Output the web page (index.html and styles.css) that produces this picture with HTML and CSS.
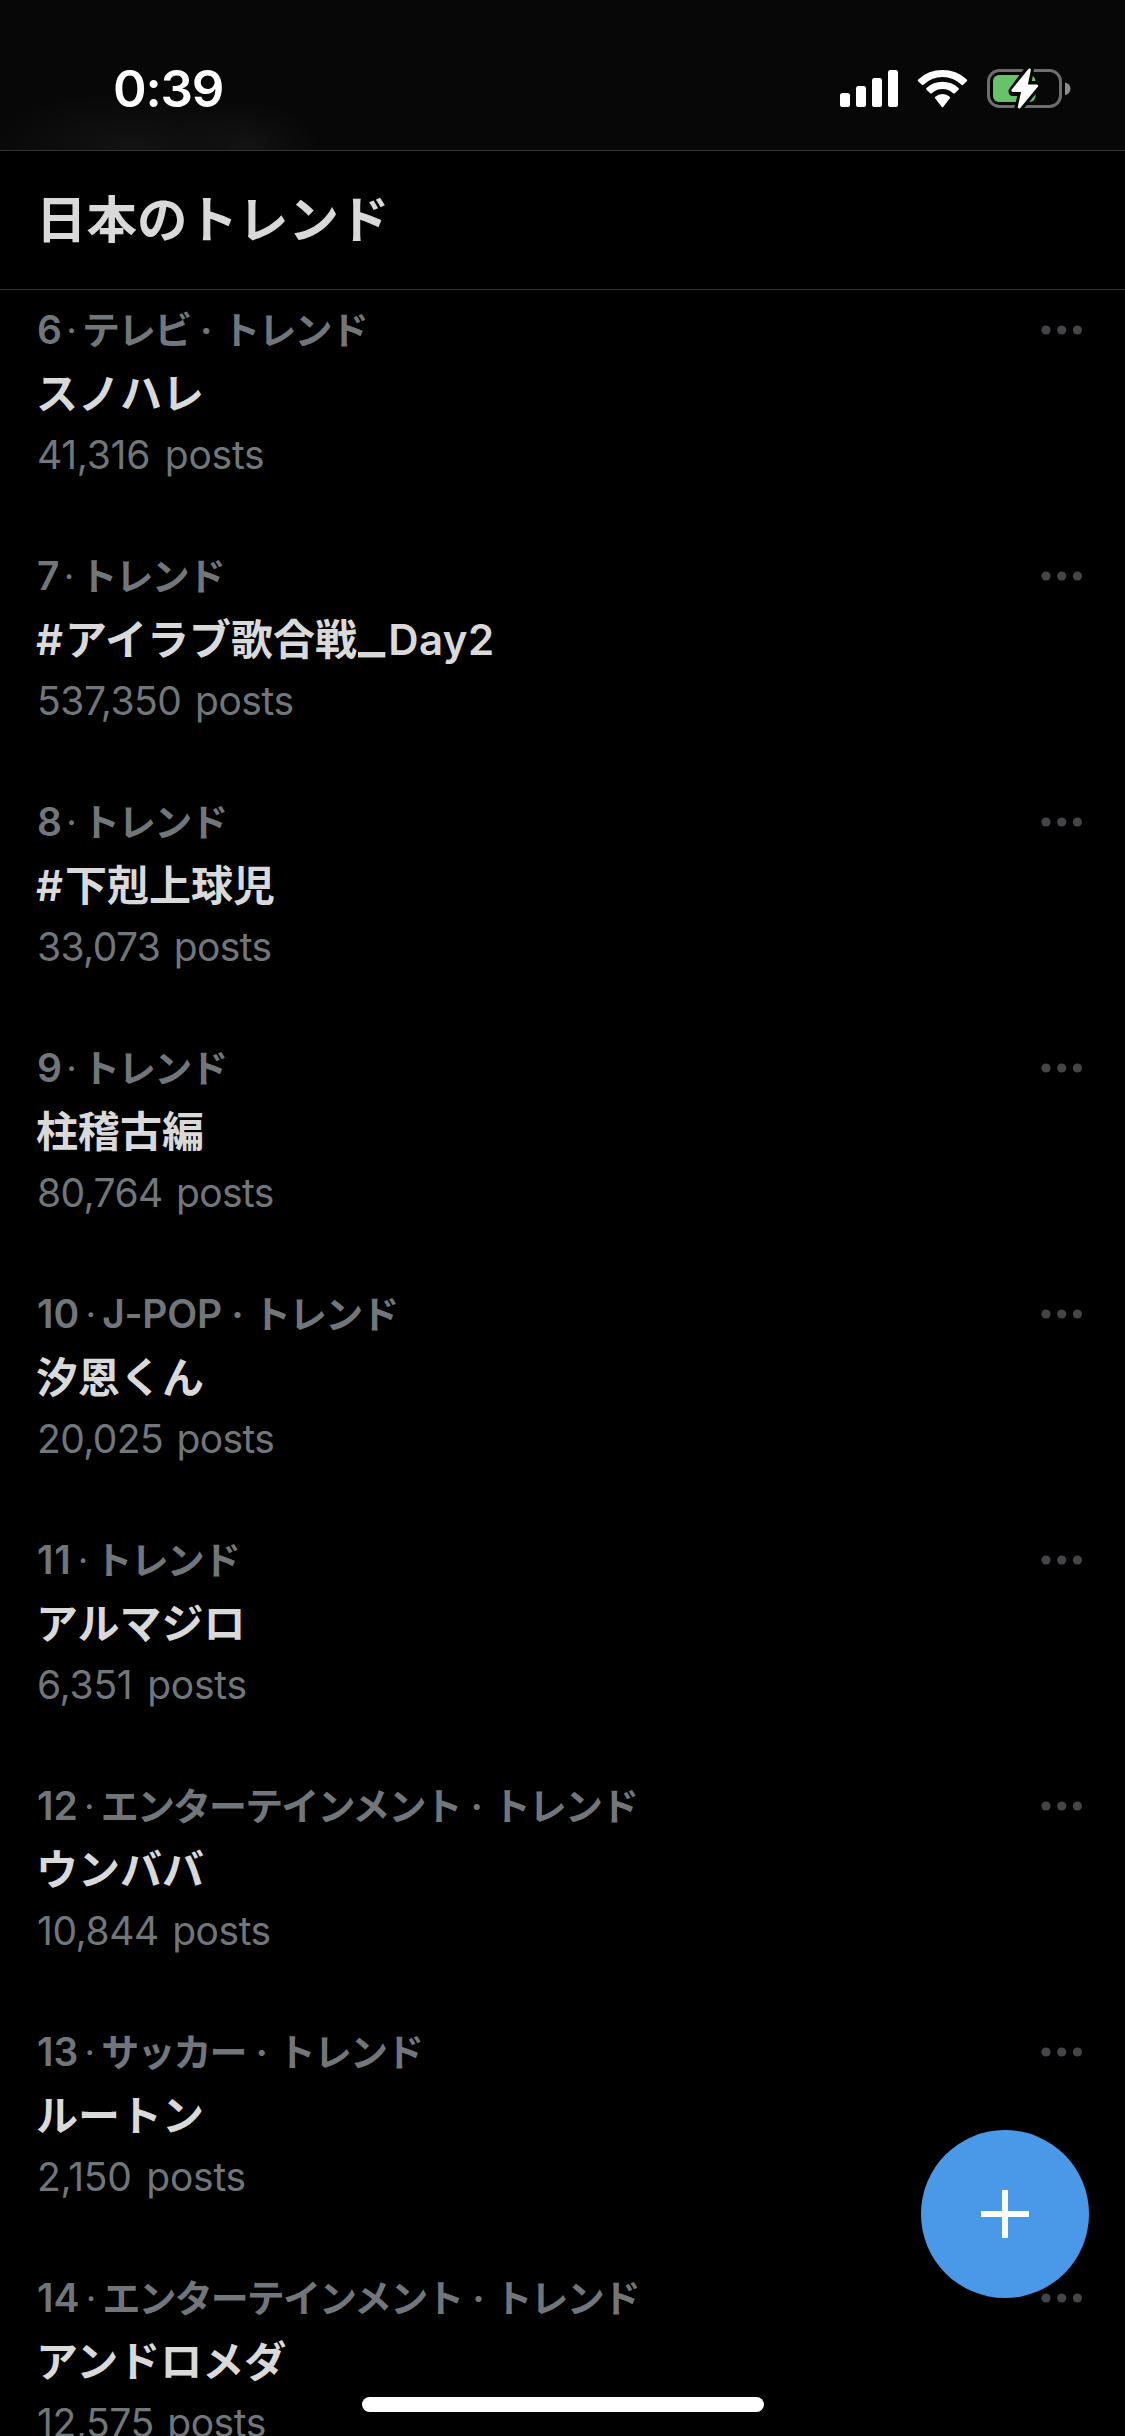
FILE: index.html
```html
<!DOCTYPE html>
<html lang="ja">
<head>
<meta charset="utf-8">
<title>日本のトレンド</title>
<link rel="stylesheet" href="styles.css">
</head>
<body>
<div class="screen">
  <header class="status">
    <span class="time">0:39</span>
    <svg class="status-icons" width="240" height="48" viewBox="0 0 240 48">
      <g fill="#fff">
        <rect x="0" y="27" width="10" height="14" rx="2.6"/>
        <rect x="16" y="20" width="10" height="21" rx="2.6"/>
        <rect x="32" y="12" width="10" height="29" rx="2.6"/>
        <rect x="48" y="4" width="10" height="37" rx="2.6"/>
        <path d="M78.2 15.2a1.2 1.2 0 0 1 0-1.7A35.5 35.5 0 0 1 126.800 13.500a1.2 1.2 0 0 1 0 1.700L123.200 18.700a1.200 1.200 0 0 1-1.700 0A27.400 27.400 0 0 0 83.500 18.700a1.200 1.200 0 0 1-1.700 0Z"/>
        <path d="M86.500 23.700a1.200 1.200 0 0 1 0-1.700A23.500 23.500 0 0 1 118.500 22a1.200 1.200 0 0 1 0 1.700L114.800 27.300a1.200 1.200 0 0 1-1.600 0A15.600 15.600 0 0 0 91.800 27.300a1.200 1.200 0 0 1-1.600 0Z"/>
        <path d="M95.300 32.500a1.200 1.200 0 0 1 0-1.800A11.300 11.300 0 0 1 109.700 30.700a1.200 1.200 0 0 1 0 1.800L103.400 40.700a1.200 1.200 0 0 1-1.800 0Z"/>
      </g>
      <rect x="148.500" y="4.500" width="72" height="36" rx="11" fill="none" stroke="#6e6e6e" stroke-width="3"/>
      <path d="M225 16.500a6.300 6.300 0 0 1 0 12.500Z" fill="#8a8a8a"/>
      <rect x="153" y="9" width="42.500" height="27" rx="6" fill="#67c466"/>
      <path d="M189.500 3L173 25.500h10L179 41.500L197 19.500h-10.500Z" fill="#070707" stroke="#070707" stroke-width="9" stroke-linejoin="round"/>
      <path d="M189.500 3.800L172.800 24.500h10L179.200 41L196.700 19.800h-10.500Z" fill="#fff" stroke="#fff" stroke-width="2.800" stroke-linejoin="round"/>
    </svg>
  </header>
  <h1 class="title">日本のトレンド</h1>
  <main class="list">
    <article class="trend"><div class="meta"><span class="rank">6</span><span class="dot">·</span><span class="category"><span class="ja">テレビ</span> · <span class="ja">トレンド</span></span><svg class="more" viewBox="0 0 42 10"><circle cx="5" cy="5" r="4.600"/><circle cx="20.700" cy="5" r="4.600"/><circle cx="36.400" cy="5" r="4.600"/></svg></div><h2 class="name">スノハレ</h2><p class="posts loose">41,316 posts</p></article>
    <article class="trend"><div class="meta"><span class="rank">7</span><span class="dot">·</span><span class="category"><span class="ja">トレンド</span></span><svg class="more" viewBox="0 0 42 10"><circle cx="5" cy="5" r="4.600"/><circle cx="20.700" cy="5" r="4.600"/><circle cx="36.400" cy="5" r="4.600"/></svg></div><h2 class="name"><span class="hash">#</span>アイラブ歌合戦<span class="underscore">_</span><span class="latin">Day2</span></h2><p class="posts">537,350 posts</p></article>
    <article class="trend"><div class="meta"><span class="rank">8</span><span class="dot">·</span><span class="category"><span class="ja">トレンド</span></span><svg class="more" viewBox="0 0 42 10"><circle cx="5" cy="5" r="4.600"/><circle cx="20.700" cy="5" r="4.600"/><circle cx="36.400" cy="5" r="4.600"/></svg></div><h2 class="name"><span class="hash">#</span>下剋上球児</h2><p class="posts tight">33,073 posts</p></article>
    <article class="trend"><div class="meta"><span class="rank">9</span><span class="dot">·</span><span class="category"><span class="ja">トレンド</span></span><svg class="more" viewBox="0 0 42 10"><circle cx="5" cy="5" r="4.600"/><circle cx="20.700" cy="5" r="4.600"/><circle cx="36.400" cy="5" r="4.600"/></svg></div><h2 class="name">柱稽古編</h2><p class="posts tight">80,764 posts</p></article>
    <article class="trend"><div class="meta"><span class="rank">10</span><span class="dot">·</span><span class="category"><span class="genre">J-POP · </span><span class="ja">トレンド</span></span><svg class="more" viewBox="0 0 42 10"><circle cx="5" cy="5" r="4.600"/><circle cx="20.700" cy="5" r="4.600"/><circle cx="36.400" cy="5" r="4.600"/></svg></div><h2 class="name">汐恩くん</h2><p class="posts tight">20,025 posts</p></article>
    <article class="trend"><div class="meta"><span class="rank wide">11</span><span class="dot">·</span><span class="category"><span class="ja">トレンド</span></span><svg class="more" viewBox="0 0 42 10"><circle cx="5" cy="5" r="4.600"/><circle cx="20.700" cy="5" r="4.600"/><circle cx="36.400" cy="5" r="4.600"/></svg></div><h2 class="name">アルマジロ</h2><p class="posts loose">6,351 posts</p></article>
    <article class="trend"><div class="meta"><span class="rank">12</span><span class="dot">·</span><span class="category"><span class="ja">エンターテインメント</span> · <span class="ja">トレンド</span></span><svg class="more" viewBox="0 0 42 10"><circle cx="5" cy="5" r="4.600"/><circle cx="20.700" cy="5" r="4.600"/><circle cx="36.400" cy="5" r="4.600"/></svg></div><h2 class="name">ウンババ</h2><p class="posts">10,844 posts</p></article>
    <article class="trend"><div class="meta"><span class="rank">13</span><span class="dot">·</span><span class="category"><span class="ja">サッカー</span> · <span class="ja">トレンド</span></span><svg class="more" viewBox="0 0 42 10"><circle cx="5" cy="5" r="4.600"/><circle cx="20.700" cy="5" r="4.600"/><circle cx="36.400" cy="5" r="4.600"/></svg></div><h2 class="name">ルートン</h2><p class="posts loose">2,150 posts</p></article>
    <article class="trend"><div class="meta"><span class="rank">14</span><span class="dot">·</span><span class="category"><span class="ja">エンターテインメント</span> · <span class="ja">トレンド</span></span><svg class="more" viewBox="0 0 42 10"><circle cx="5" cy="5" r="4.600"/><circle cx="20.700" cy="5" r="4.600"/><circle cx="36.400" cy="5" r="4.600"/></svg></div><h2 class="name">アンドロメダ</h2><p class="posts">12,575 posts</p></article>
  </main>
  <button class="fab" aria-label="投稿"><svg width="48" height="48" viewBox="0 0 48 48"><path d="M21 0h6v21h21v6H27v21h-6V27H0v-6h21Z" fill="#fff"/></svg></button>
  <div class="home-indicator"></div>
</div>
</body>
</html>
```
FILE: styles.css
```css
* { box-sizing: border-box; }
body { margin: 0; background: #000; }
h1, h2, p { margin: 0; }

.screen {
  position: relative;
  width: 1125px;
  height: 2436px;
  overflow: hidden;
  background: #000;
  color: #d9d9d9;
  font-family: Inter, "Noto Sans CJK JP", sans-serif;
}

.status {
  display: flex;
  justify-content: space-between;
  height: 151px;
  padding: 58px 45px 0 113px;
  border-bottom: 1px solid #333335;
  background:
    radial-gradient(ellipse 150px 60px at 130px 150px, #131313, transparent),
    radial-gradient(ellipse 75px 50px at 245px 150px, #131313, transparent),
    #070707;
}
.time {
  color: #fff;
  font-size: 51px;
  font-weight: 600;
  line-height: 62px;
  letter-spacing: -1.200px;
}
.status-icons { margin-top: 8px; flex: none; }

.title {
  height: 139px;
  padding-left: 36px;
  border-bottom: 1px solid #333335;
  font-family: "Noto Sans CJK JP", sans-serif;
  font-size: 50.500px;
  font-weight: 700;
  line-height: 131px;
}

.trend { height: 246px; padding: 10px 37px 0; }
.meta {
  display: flex;
  height: 60px;
  color: #71767b;
  font-size: 39px;
  font-weight: 600;
  line-height: 60px;
  white-space: pre;
}
.rank.wide { letter-spacing: .800px; }
.dot { width: 23px; text-align: center; font-size: 30px; }
.trend:nth-child(-n+4) .dot { margin: 0 -1px 0 -2px; }
.genre { letter-spacing: -.300px; }
.ja {
  font-family: "Noto Sans CJK JP", sans-serif;
  font-size: 38px;
  font-weight: 700;
  line-height: 1;
  letter-spacing: -1.900px;
}
.more { width: 42px; height: 10px; margin: 25px 5px 0 auto; fill: #434548; }
.name { margin-left: -1px; font-size: 42px; font-weight: 600; line-height: 67px; }
.hash { margin-right: 2px; }
.underscore {
  margin: 0 3px 0 1px;
  font-size: 59px;
  font-weight: 500;
  line-height: 0;
  vertical-align: 3px;
}
.latin { letter-spacing: .400px; }
.posts {
  color: #71767b;
  font-size: 39px;
  line-height: 55px;
  letter-spacing: -.450px;
  word-spacing: 3px;
}
.posts.tight { letter-spacing: -.600px; }
.posts.loose { letter-spacing: -.250px; word-spacing: 4px; }

.fab {
  position: absolute;
  right: 36px;
  bottom: 138px;
  display: grid;
  place-items: center;
  width: 168px;
  height: 168px;
  padding: 0;
  border: 0;
  border-radius: 50%;
  background: #4a99e9;
}
.home-indicator {
  position: absolute;
  left: 362px;
  bottom: 24px;
  width: 402px;
  height: 15px;
  border-radius: 8px;
  background: #fff;
}
```
